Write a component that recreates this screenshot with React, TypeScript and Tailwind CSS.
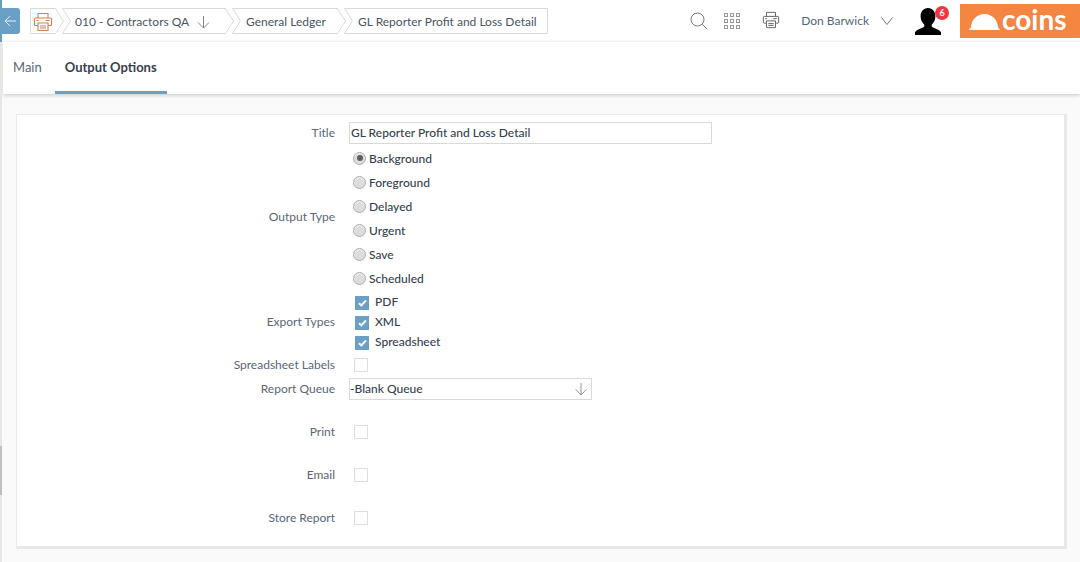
import React from 'react';

const Crumb: React.FC<{ width: number; first?: boolean; last?: boolean; children?: React.ReactNode }> = ({ width, first, last, children }) => {
  const h = 26;
  const notch = first ? 0 : 8;
  const tip = last ? 0 : 8;
  const pts = `0.5,0.5 ${width - tip - 0.5},0.5 ${width - 0.5},${h / 2} ${width - tip - 0.5},${h - 0.5} 0.5,${h - 0.5} ${notch + 0.5},${h / 2}`;
  return (
    <div className="relative flex h-[26px] shrink-0 items-center" style={{ width }}>
      <svg width={width} height={h} className="absolute left-0 top-0">
        <polygon points={pts} fill="#fff" stroke="#d9d9d9" />
      </svg>
      <div className="relative mt-[1px] flex items-center whitespace-nowrap">{children}</div>
    </div>
  );
};

const PrinterIcon: React.FC<{ color: string; size?: number }> = ({ color, size = 20 }) => (
  <svg width={size} height={size} viewBox="0 0 20 20" fill="none" stroke={color} strokeWidth="1.1">
    <path d="M5 6V1.5h10V6" />
    <rect x="1.5" y="6" width="17" height="7.5" rx="1" />
    <path d="M5 11h10v7.5H5z" fill="#fff" />
    <path d="M7 14h6M7 16h6M3.5 8.5h2M12.5 8.5h4" />
  </svg>
);

const Radio: React.FC<{ label: string; checked?: boolean }> = ({ label, checked }) => (
  <div className="flex h-6 items-center">
    <span className="ml-[4px] flex h-[13px] w-[13px] -translate-y-[1px] items-center justify-center rounded-full border border-[#adadad] bg-[#dcdcdc] shadow-[inset_0_1px_1px_#f4f4f4]">
      {checked && <span className="h-[6px] w-[6px] rounded-full bg-[#5f5f5f]" />}
    </span>
    <span className="ml-[3px] text-xs font-medium text-[#36414f]">{label}</span>
  </div>
);

const CheckedBox: React.FC<{ label: string }> = ({ label }) => (
  <div className="flex h-5 items-center">
    <span className="ml-[6px] flex h-[14px] w-[14px] translate-y-[1px] items-center justify-center bg-[#6a9fc6]">
      <svg width="9" height="8" viewBox="0 0 9 8" fill="none" stroke="#fff" strokeWidth="2">
        <path d="M1 4.2 3.4 6.4 8 1.4" />
      </svg>
    </span>
    <span className="ml-[6px] text-xs font-medium text-[#36414f]">{label}</span>
  </div>
);

const EmptyBox = () => <span className="ml-[5px] block h-[14px] w-[14px] border border-[#dedede] bg-white" />;

const Row: React.FC<{ label: string; className?: string; labelClass?: string; children?: React.ReactNode }> = ({ label, className = '', labelClass = '', children }) => (
  <div className={`grid grid-cols-[318px_1fr] items-center gap-x-[14px] ${className}`}>
    <div className={`text-right text-xs text-[#5a6675] ${labelClass}`}>{label}</div>
    <div>{children}</div>
  </div>
);

export default function App() {
  return (
    <div className="relative h-[562px] w-[1080px] overflow-hidden bg-[#fafafa] font-['Lato',_sans-serif]">
      {/* page scrollbar strip */}
      <div className="absolute bottom-0 left-0 top-[42px] w-[2px] bg-[#e6e6e6]">
        <div className="mt-[404px] h-[49px] w-[2px] bg-[#c0c0c0]" />
      </div>

      {/* top bar */}
      <div className="flex h-[42px] bg-white">
        <div className="h-[42px] w-[2px] shrink-0 bg-[#6a9fc0]" />
        <div className="-ml-[2px] mt-2 flex h-[26px] w-5 shrink-0 items-center justify-center rounded-r-[3px] bg-[#6a9fc6]">
          <svg width="13" height="12" viewBox="0 0 13 12" fill="none" stroke="#fff" strokeWidth="0.9" className="opacity-90">
            <path d="M12 6H1M6 1 1 6l5 5" />
          </svg>
        </div>
        <div className="ml-[10px] mt-2 flex h-[26px]">
          <Crumb width={34} first>
            <span className="ml-[3px]"><PrinterIcon color="#cf7f58" /></span>
          </Crumb>
          <div className="-ml-[2px]">
            <Crumb width={172}>
              <span className="ml-[13px] text-xs text-[#4a5562]">010 - Contractors QA</span>
              <svg width="13" height="14" viewBox="0 0 13 14" fill="none" stroke="#777" strokeWidth="0.9" className="ml-[8px]">
                <path d="M6.5 1v12M1 7.5l5.5 5.5L12 7.5" />
              </svg>
            </Crumb>
          </div>
          <div className="-ml-[2px]">
            <Crumb width={114}>
              <span className="ml-[14px] text-xs text-[#4a5562]">General Ledger</span>
            </Crumb>
          </div>
          <div className="-ml-[2px]">
            <Crumb width={204} last>
              <span className="ml-[14px] text-xs text-[#4a5562]">GL Reporter Profit and Loss Detail</span>
            </Crumb>
          </div>
        </div>

        <div className="ml-auto flex">
          <svg width="18" height="18" viewBox="0 0 18 18" fill="none" stroke="#777" strokeWidth="1" className="mr-[16px] mt-3">
            <circle cx="7.5" cy="7.5" r="6.5" />
            <path d="m12.3 12.3 5 5" />
          </svg>
          <div className="mr-[22px] mt-[13px] grid h-[16px] w-[16px] grid-cols-3 gap-[2px]">
            {[0, 1, 2, 3, 4, 5, 6, 7, 8].map((i) => (
              <span key={i} className="h-[4px] w-[4px] border border-[#999]" />
            ))}
          </div>
          <span className="mr-[21px] mt-[11px]"><PrinterIcon color="#666" size={18} /></span>
          <span className="mt-[13px] h-4 text-xs leading-4 text-[#56657a]">Don Barwick</span>
          <svg width="12" height="8" viewBox="0 0 12 8" fill="none" stroke="#666" strokeWidth="0.9" className="ml-[12px] mt-[17px]">
            <path d="M.5.5 6 7.5 11.5.5" />
          </svg>
          <div className="relative ml-[22px] mt-[7px] h-[28px] w-[32px]">
            <svg width="26" height="28" viewBox="0 0 28 30" preserveAspectRatio="none" fill="#000">
              <path d="M14 1c5 0 8 4 8 9 0 4-2 7-4 9v2c2 2 8 3 10 6 .3 1 0 3 0 3H0s-.3-2 0-3c2-3 8-4 10-6v-2c-2-2-4-5-4-9 0-5 3-9 8-9z" />
            </svg>
            <span className="absolute left-[20px] -top-[1px] flex h-[14px] w-[14px] items-center justify-center rounded-full bg-[#f0363f] text-[9px] font-bold text-white">6</span>
          </div>
          <div className="ml-[13px] mt-1 flex h-[34px] w-[120px] items-center bg-[#f58642] pl-[9px]">
            <svg width="31" height="17" viewBox="0 0 30 18" preserveAspectRatio="none" fill="#fff">
              <path d="M0 18c0-1 1-2 2-3 0-8 6-14 13-14s13 6 13 14c1 1 2 2 2 3z" />
            </svg>
            <span className="ml-[2px] -translate-y-[2px] text-[28px] font-bold leading-none text-white">coins</span>
          </div>
        </div>
      </div>

      {/* tabs */}
      <div className="ml-[3px] flex h-[52px] items-stretch bg-white shadow-[0_1px_4px_rgba(0,0,0,0.22)]">
        <div className="ml-[10px] flex items-center text-[13px] text-[#5a6675]">Main</div>
        <div className="ml-[13px] flex w-[112px] items-center justify-center border-b-[3px] border-[#6a9fc0] pt-[3px] text-[13px] font-bold text-[#36414f]">Output Options</div>
      </div>

      {/* form */}
      <div className="ml-4 mt-5 h-[435px] w-[1051px] border-t border-l border-[#ebebeb] border-r-[3px] border-b-[3px] border-r-[#e8e8e8] border-b-[#e8e8e8] bg-white pt-[7px]">
        <Row label="Title" className="h-[22px]">
          <div className="flex h-[22px] w-[363px] items-center border border-[#d9d9d9] pl-[1px] text-xs font-medium text-[#36414f]">GL Reporter Profit and Loss Detail</div>
        </Row>
        <Row label="Output Type" labelClass="pb-[4px]" className="mt-[3px]">
          <Radio label="Background" checked />
          <Radio label="Foreground" />
          <Radio label="Delayed" />
          <Radio label="Urgent" />
          <Radio label="Save" />
          <Radio label="Scheduled" />
        </Row>
        <Row label="Export Types" className="mt-[1px]">
          <CheckedBox label="PDF" />
          <CheckedBox label="XML" />
          <CheckedBox label="Spreadsheet" />
        </Row>
        <Row label="Spreadsheet Labels" className="mt-[3px] h-5"><EmptyBox /></Row>
        <Row label="Report Queue" className="mt-[3px] h-[22px]">
          <div className="flex h-[22px] w-[243px] items-center justify-between border border-[#d9d9d9] pr-[4px] text-xs font-medium text-[#36414f]">
            <span>-Blank Queue</span>
            <svg width="12" height="14" viewBox="0 0 12 14" fill="none" stroke="#888" strokeWidth="0.9">
              <path d="M6 1v12M.7 7.5 6 13l5.3-5.5" />
            </svg>
          </div>
        </Row>
        <Row label="Print" className="mt-[10px] h-[43px]"><EmptyBox /></Row>
        <Row label="Email" className="h-[43px]"><EmptyBox /></Row>
        <Row label="Store Report" className="h-[43px]"><EmptyBox /></Row>
      </div>
    </div>
  );
}
